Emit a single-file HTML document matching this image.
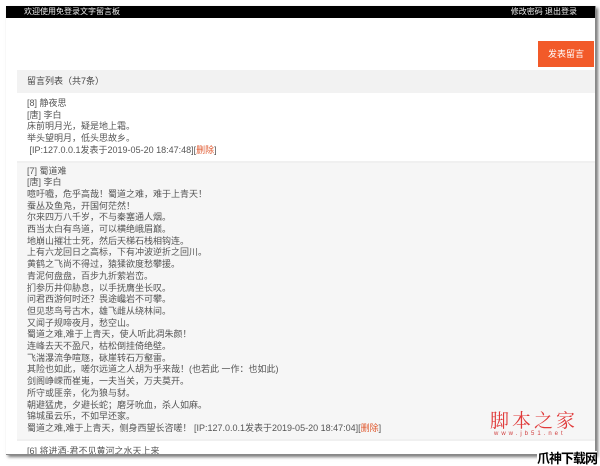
<!DOCTYPE html>
<html><head><meta charset="utf-8"><style>
*{margin:0;padding:0;box-sizing:border-box}
body{width:600px;height:466px;background:#fff;position:relative;overflow:hidden;font-family:"Liberation Sans","Noto Sans CJK SC",sans-serif;color:#555;font-size:9px}
.win{position:absolute;left:6px;top:6px;width:590px;height:449px;background:#fff;box-shadow:2px 2px 3px #777;border-right:1px solid #888;border-bottom:1px solid #888;overflow:hidden}
.bar{height:12px;background:#000;color:#eee;font-size:8px;line-height:12px;padding:0 18px;display:flex;justify-content:space-between}
.btn{position:absolute;left:532px;top:35px;width:56px;height:26px;background:#f25a29;color:#fff;font-size:9px;line-height:26px;text-align:center}
.panel{position:absolute;left:11px;top:64px;width:590px}
.hd{height:23px;background:#f2f2f2;line-height:23px;padding-left:10px;font-size:9px;color:#444}
.it{padding:5px 0 4px 10px;line-height:11.7px;border-bottom:2px solid #f0f0f0;white-space:nowrap}
.g{background:#f6f6f6;padding-top:3px}
.r{color:#e05a30}
.wm{position:absolute;left:490px;top:406px;color:#e03a3a;font-size:19px;letter-spacing:3px;font-family:"Noto Serif CJK SC",serif;white-space:nowrap}
.wm2{position:absolute;left:494px;top:431px;color:#d04040;font-size:6px;letter-spacing:3px;white-space:nowrap}
.lg{position:absolute;left:537px;top:451px;font-size:13px;line-height:15px;font-weight:bold;color:#000;background:#fff;letter-spacing:-1px;white-space:nowrap}
</style></head><body>
<div class="win">
<div class="bar"><span>欢迎使用免登录文字留言板</span><span>修改密码 退出登录</span></div>
<div class="btn">发表留言</div>
<div class="panel">
<div class="hd">留言列表（共7条）</div>
<div class="it">[8] 静夜思<br>[唐] 李白<br>床前明月光，疑是地上霜。<br>举头望明月，低头思故乡。<br>&nbsp;[IP:127.0.0.1发表于2019-05-20 18:47:48][<span class="r">删除</span>]</div>
<div class="it g">[7] 蜀道难<br>[唐] 李白<br>噫吁嚱，危乎高哉！蜀道之难，难于上青天！<br>蚕丛及鱼凫，开国何茫然！<br>尔来四万八千岁，不与秦塞通人烟。<br>西当太白有鸟道，可以横绝峨眉巅。<br>地崩山摧壮士死，然后天梯石栈相钩连。<br>上有六龙回日之高标，下有冲波逆折之回川。<br>黄鹤之飞尚不得过，猿猱欲度愁攀援。<br>青泥何盘盘，百步九折萦岩峦。<br>扪参历井仰胁息，以手抚膺坐长叹。<br>问君西游何时还？畏途巉岩不可攀。<br>但见悲鸟号古木，雄飞雌从绕林间。<br>又闻子规啼夜月，愁空山。<br>蜀道之难,难于上青天，使人听此凋朱颜！<br>连峰去天不盈尺，枯松倒挂倚绝壁。<br>飞湍瀑流争喧豗，砯崖转石万壑雷。<br>其险也如此，嗟尔远道之人胡为乎来哉！(也若此 一作：也如此)<br>剑阁峥嵘而崔嵬，一夫当关，万夫莫开。<br>所守或匪亲，化为狼与豺。<br>朝避猛虎，夕避长蛇；磨牙吮血，杀人如麻。<br>锦城虽云乐，不如早还家。<br>蜀道之难,难于上青天，侧身西望长咨嗟！ [IP:127.0.0.1发表于2019-05-20 18:47:04][<span class="r">删除</span>]</div>
<div class="it">[6] 将进酒·君不见黄河之水天上来</div>
</div>
</div>
<div class="wm">脚本之家</div>
<div class="wm2">www.jb51.net</div>
<div class="lg">爪神下载网</div>
</body></html>
